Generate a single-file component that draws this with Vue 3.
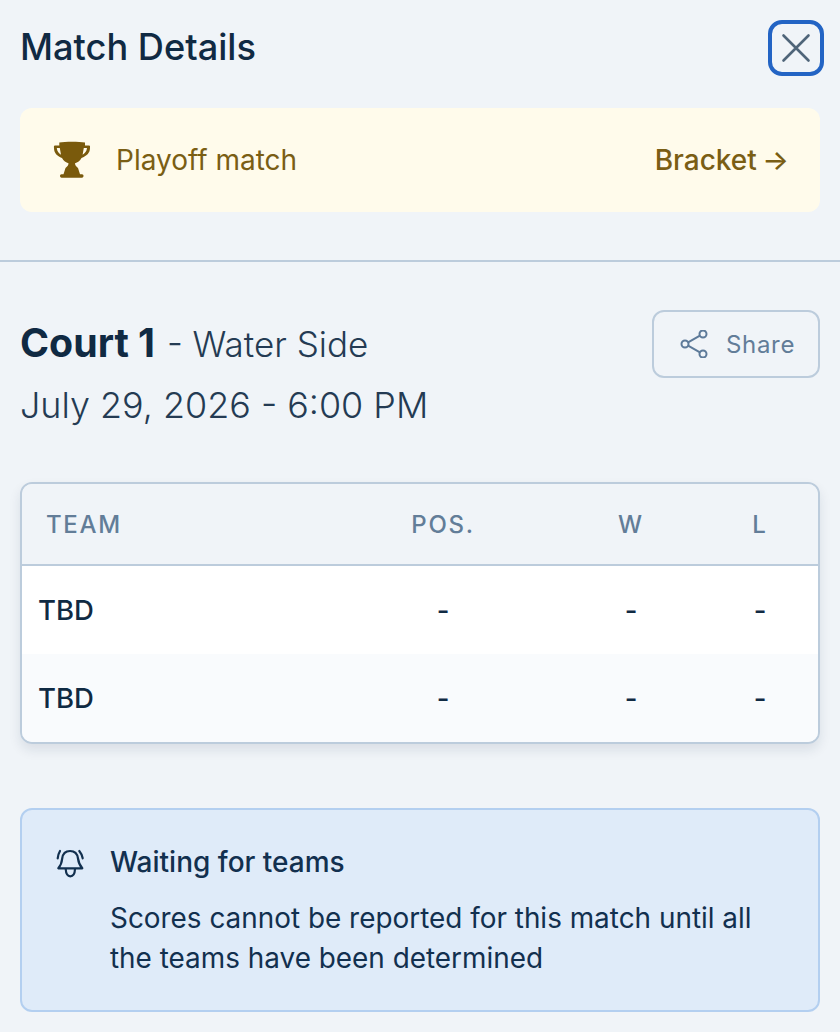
<script setup>
const rows = [
  { team: 'TBD', pos: '-', w: '-', l: '-' },
  { team: 'TBD', pos: '-', w: '-', l: '-' }
]
</script>

<template>
  <div class="page">
    <header class="top">
      <h1 class="title">Match Details</h1>
      <button class="close" aria-label="Close">
        <svg width="32" height="32" viewBox="0 0 32 32" fill="none" stroke="#4f6579" stroke-width="2.6" stroke-linecap="round">
          <path d="M3.5 3.5 28.5 28.5M28.5 3.5 3.5 28.5" />
        </svg>
      </button>
    </header>

    <div class="playoff">
      <div class="playoff_left">
        <svg class="trophy" width="38" height="38" viewBox="0 0 38 38" fill="#7a5a0c">
          <path fill-rule="evenodd" d="M6.300 1.500C12 .5 26 .5 32 1.500V4.500H36C37.500 4.500 37 6 37 7C37 12 33.500 15 28.500 17C27 20 24.500 21.500 22 22.300C22 24 23 25.500 25 27L27 33.300H29C31 33.300 31 36.700 29 36.700H8.500C6.500 36.700 6.500 33.300 8.500 33.300H10.500L12.500 27C14.500 25.500 15.500 24 15.500 22.300C13 21.500 10.500 20 9 17C4 15 1 12 1 7C1 6 .5 4.500 2 4.500H6.300ZM3.800 7C4 10 5.800 12.500 8 13.800L6.800 7ZM34 7H30.800L29.600 13.800C31.800 12.500 33.800 10 34 7Z" />
        </svg>
        <span class="playoff_text">Playoff match</span>
      </div>
      <span class="bracket">Bracket →</span>
    </div>

    <hr class="divider" />

    <section class="info">
      <div class="info_text">
        <div class="court"><strong>Court 1</strong> - Water Side</div>
        <div class="date">July 29, 2026 - 6:00 PM</div>
      </div>
      <button class="share">
        <svg width="28" height="28" viewBox="0 0 28 28" fill="none" stroke="#5d7a99" stroke-width="2">
          <circle cx="5" cy="14" r="3.500" />
          <circle cx="23" cy="4" r="3.500" />
          <circle cx="23" cy="24" r="3.500" />
          <path d="M8.100 12.300 19.900 5.700M8.100 15.700 19.900 22.300" />
        </svg>
        <span>Share</span>
      </button>
    </section>

    <div class="table">
      <div class="row head">
        <div class="c_team head_team">TEAM</div>
        <div class="c_pos">POS.</div>
        <div class="c_w">W</div>
        <div class="c_l">L</div>
      </div>
      <div v-for="(r, i) in rows" :key="i" class="row body" :class="{ alt: i === 1 }">
        <div class="c_team team_name">{{ r.team }}</div>
        <div class="c_pos">{{ r.pos }}</div>
        <div class="c_w">{{ r.w }}</div>
        <div class="c_l">{{ r.l }}</div>
      </div>
    </div>

    <div class="notice">
      <svg class="bell" width="30" height="30" viewBox="0 0 30 30" fill="none" stroke="#12304f" stroke-width="2.2" stroke-linecap="round" stroke-linejoin="round">
        <path d="M15 3C10 3 7.700 6.500 7.200 10.500C6.800 14.500 5.800 17.500 3.300 20.300H27.300C24.800 17.500 23.500 14.500 23 10.500C22.500 6.500 20 3 15 3Z" />
        <path d="M10.700 21C11 26 13 28.300 15.300 28.300C17.800 28.300 19.800 26 20 21" />
        <path d="M5 3C3.800 5 3 7.500 2.700 10.300M24.300 3C26 5 27.200 7.500 27.700 10.300" />
      </svg>
      <div class="notice_body">
        <div class="notice_title">Waiting for teams</div>
        <p class="notice_text">Scores cannot be reported for this match until all the teams have been determined</p>
      </div>
    </div>
  </div>
</template>

<style>
html,
body {
  margin: 0;
  background: #f0f4f8;
}
</style>

<style scoped>
.page {
  width: 840px;
  height: 1032px;
  box-sizing: border-box;
  padding: 20px 20px 0;
  overflow: hidden;
  background: #f0f4f8;
  font-family: Inter, "Noto Sans", sans-serif;
  color: #102a43;
}

.top {
  display: flex;
  align-items: center;
  justify-content: space-between;
  height: 56px;
  margin-right: -4px;
}

.title {
  margin: 0 0 2px;
  font-size: 36.200px;
  font-weight: 500;
  color: #102a43;
}

.close {
  display: flex;
  align-items: center;
  justify-content: center;
  width: 56px;
  height: 56px;
  padding: 0;
  background: none;
  border: 4px solid #2364c4;
  border-radius: 14px;
}

.playoff {
  display: flex;
  align-items: center;
  justify-content: space-between;
  height: 104px;
  margin-top: 32px;
  padding: 0 31px 0 33px;
  background: #fffbeb;
  border-radius: 12px;
  color: #7a5e14;
}

.playoff_left {
  display: flex;
  align-items: center;
  gap: 25px;
}

.playoff_text {
  font-size: 28px;
}

.bracket {
  font-size: 28px;
  font-weight: 500;
  word-spacing: -2px;
}

.divider {
  height: 2px;
  margin: 48px -20px 0;
  background: #bcccdc;
  border: 0;
}

.info {
  display: flex;
  align-items: flex-start;
  justify-content: space-between;
  margin-top: 48px;
}

.court {
  margin-top: 2px;
  font-size: 35px;
  font-weight: 300;
  line-height: 62px;
  color: #243b53;
}

.court strong {
  margin-right: 2px;
  font-size: 39.300px;
  font-weight: 700;
  color: #102a43;
}

.date {
  font-size: 35.900px;
  font-weight: 300;
  line-height: 61px;
  color: #243b53;
}

.share {
  display: flex;
  align-items: center;
  justify-content: center;
  gap: 18px;
  width: 168px;
  height: 68px;
  padding: 0 0 0 3px;
  background: none;
  border: 2px solid #bcccdc;
  border-radius: 12px;
  font-family: inherit;
  font-size: 24px;
  font-weight: 400;
  letter-spacing: 0.700px;
  color: #627d98;
}

.table {
  margin-top: 46px;
  border: 2px solid #bcccdc;
  border-radius: 12px;
  overflow: hidden;
  box-shadow: 0 6px 12px rgba(16, 42, 67, 0.1);
}

.row {
  display: grid;
  grid-template-columns: 304px 234px 142px 116px;
  align-items: center;
  text-align: center;
  height: 88px;
}

.head {
  height: 80px;
  border-bottom: 2px solid #bcccdc;
  background: #f0f4f8;
  font-size: 24px;
  font-weight: 450;
  letter-spacing: 1.700px;
  color: #627d98;
}

.head_team {
  padding-left: 24px;
  text-align: left;
}

.body {
  background: #fff;
  font-size: 27.500px;
  font-weight: 450;
  color: #102a43;
}

.alt {
  background: #f9fbfd;
}

.team_name {
  padding-left: 16px;
  text-align: left;
}

.notice {
  display: flex;
  gap: 25px;
  height: 204px;
  box-sizing: border-box;
  margin-top: 64px;
  padding: 35px 33px 0;
  background: #dfebf9;
  border: 2px solid #b3cff0;
  border-radius: 12px;
}

.bell {
  flex: none;
  margin-top: 3px;
}

.notice_body {
  width: 650px;
}

.notice_title {
  font-size: 28px;
  font-weight: 500;
  line-height: 34px;
  color: #12304f;
}

.notice_text {
  margin: 19px 0 0;
  font-size: 27.900px;
  line-height: 40px;
  color: #12304f;
}
</style>
